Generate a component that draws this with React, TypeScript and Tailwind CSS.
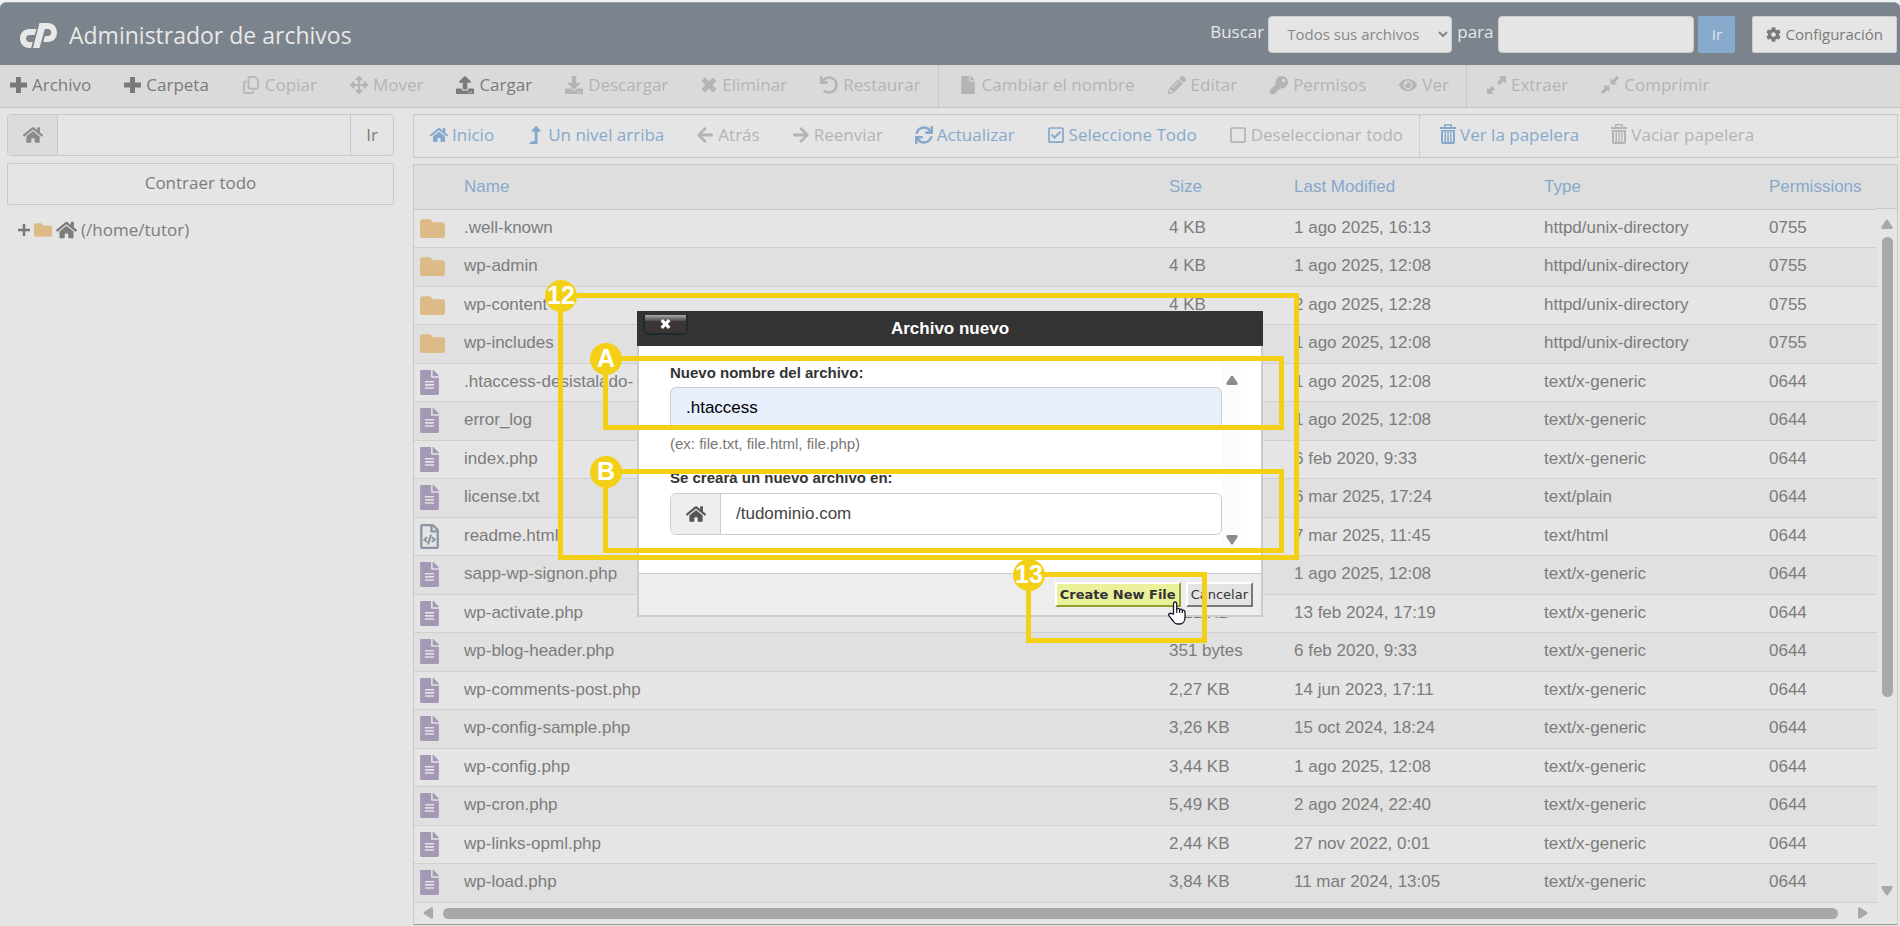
import type { ReactNode } from 'react';
import clsx from 'clsx';
import {
  FaArrowLeft,
  FaArrowRight,
  FaArrowsAlt,
  FaCog,
  FaDownload,
  FaEye,
  FaFile,
  FaFileAlt,
  FaFolder,
  FaHome,
  FaKey,
  FaLevelUpAlt,
  FaPencilAlt,
  FaRegCheckSquare,
  FaRegFileCode,
  FaRegSquare,
  FaSync,
  FaUndo,
  FaUpload,
} from 'react-icons/fa';
import { FaRegCopy } from 'react-icons/fa6';

type FileKind = 'folder' | 'text' | 'html';

interface FileRow {
  kind: FileKind;
  name: string;
  size: string;
  modified: string;
  type: string;
  permissions: string;
}

interface IconProps {
  className?: string;
}

interface Action {
  label: string;
  icon: (props: IconProps) => ReactNode;
  disabled?: boolean;
  divider?: boolean;
}

const Logo = ({ className }: IconProps) => (
  <svg viewBox="0 0 37 25" className={className} fill="currentColor">
    <path d="M16.500 6H9.500C4 6 0 10 0 15.500S4 25 9.500 25H11L12.800 19H9.500C7.500 19 6 17.500 6 15.500S7.500 12 9.500 12H14.600Z" />
    <path d="M19.500 0H28C33 0 37 4 37 9.500S33 19 28 19H23.300L25 13H28C30 13 31.200 11.500 31.200 9.500S30 6 28 6H24.800L19.500 25H13Z" />
  </svg>
);

const PlusIcon = ({ className }: IconProps) => (
  <svg viewBox="0 0 17 18" className={className} fill="currentColor">
    <path d="M6 1H11V6.500H17V11.500H11V17H6V11.500H0V6.500H6Z" />
  </svg>
);

const CrossIcon = ({ className }: IconProps) => (
  <svg viewBox="0 0 16 18" className={className} fill="currentColor">
    <path d="M4 1.500L8 5.500L12 1.500L15.500 5L11.500 9L15.500 13L12 16.500L8 12.500L4 16.500L.5 13L4.500 9L.5 5Z" />
  </svg>
);

const TrashIcon = ({ className }: IconProps) => (
  <svg viewBox="0 0 16 18" className={clsx('overflow-visible', className)} fill="currentColor">
    <path d="M4 1V-1Q4 -2 5 -2H11Q12 -2 12 -1V1H16V3H0V1ZM5.500 1H10.500V-.5H5.500Z" />
    <path
      fillRule="evenodd"
      d="M1 4H15V16Q15 18 13 18H3Q1 18 1 16ZM3 5.500V16H4.500V5.500ZM6 5.500V16H7.300V5.500ZM8.800 5.500V16H10.100V5.500ZM11.500 5.500V16H13V5.500Z"
    />
  </svg>
);

const ExpandIcon = ({ className }: IconProps) => (
  <svg viewBox="0 0 19 18" className={className} fill="currentColor">
    <path d="M11.500 0H19V7.500L16.600 5.200L12.500 9.200L9.900 6.600L13.800 2.500Z" />
    <path d="M0 18V11.500L2 13.300L5.500 10L8 12.500L4.600 15.800L6.500 18Z" />
  </svg>
);

const CompressIcon = ({ className }: IconProps) => (
  <svg viewBox="0 0 18 18" className={className} fill="currentColor">
    <path d="M9.500 8.500V2L11.700 4.100L15.800 0L18 2.200L13.900 6.300L16 8.500Z" />
    <path d="M8.500 9.500V16L6.300 13.900L2.200 18L0 15.800L4.100 11.700L2 9.500Z" />
  </svg>
);

const dir = (name: string, modified: string): FileRow => ({
  kind: 'folder',
  name,
  size: '4 KB',
  modified,
  type: 'httpd/unix-directory',
  permissions: '0755',
});

const file = (
  name: string,
  size: string,
  modified: string,
  type = 'text/x-generic',
  kind: FileKind = 'text'
): FileRow => ({ kind, name, size, modified, type, permissions: '0644' });

const files: FileRow[] = [
  dir('.well-known', '1 ago 2025, 16:13'),
  dir('wp-admin', '1 ago 2025, 12:08'),
  dir('wp-content', '2 ago 2025, 12:28'),
  dir('wp-includes', '1 ago 2025, 12:08'),
  file('.htaccess-desistalado-', '523 bytes', '1 ago 2025, 12:08'),
  file('error_log', '1,2 KB', '1 ago 2025, 12:08'),
  file('index.php', '405 bytes', '6 feb 2020, 9:33'),
  file('license.txt', '19,4 KB', '6 mar 2025, 17:24', 'text/plain'),
  file('readme.html', '7,25 KB', '7 mar 2025, 11:45', 'text/html', 'html'),
  file('sapp-wp-signon.php', '3,1 KB', '1 ago 2025, 12:08'),
  file('wp-activate.php', '7,21 KB', '13 feb 2024, 17:19'),
  file('wp-blog-header.php', '351 bytes', '6 feb 2020, 9:33'),
  file('wp-comments-post.php', '2,27 KB', '14 jun 2023, 17:11'),
  file('wp-config-sample.php', '3,26 KB', '15 oct 2024, 18:24'),
  file('wp-config.php', '3,44 KB', '1 ago 2025, 12:08'),
  file('wp-cron.php', '5,49 KB', '2 ago 2024, 22:40'),
  file('wp-links-opml.php', '2,44 KB', '27 nov 2022, 0:01'),
  file('wp-load.php', '3,84 KB', '11 mar 2024, 13:05'),
];

const mainActions: Action[] = [
  { label: 'Archivo', icon: PlusIcon },
  { label: 'Carpeta', icon: PlusIcon },
  { label: 'Copiar', icon: FaRegCopy, disabled: true },
  { label: 'Mover', icon: FaArrowsAlt, disabled: true },
  { label: 'Cargar', icon: FaUpload },
  { label: 'Descargar', icon: FaDownload, disabled: true },
  { label: 'Eliminar', icon: CrossIcon, disabled: true },
  { label: 'Restaurar', icon: FaUndo, disabled: true },
  { label: 'Cambiar el nombre', icon: FaFile, disabled: true, divider: true },
  { label: 'Editar', icon: FaPencilAlt, disabled: true },
  { label: 'Permisos', icon: FaKey, disabled: true },
  { label: 'Ver', icon: FaEye, disabled: true },
  { label: 'Extraer', icon: ExpandIcon, disabled: true, divider: true },
  { label: 'Comprimir', icon: CompressIcon, disabled: true },
];

const navActions: Action[] = [
  { label: 'Inicio', icon: FaHome },
  { label: 'Un nivel arriba', icon: FaLevelUpAlt },
  { label: 'Atrás', icon: FaArrowLeft, disabled: true },
  { label: 'Reenviar', icon: FaArrowRight, disabled: true },
  { label: 'Actualizar', icon: FaSync },
  { label: 'Seleccione Todo', icon: FaRegCheckSquare },
  { label: 'Deseleccionar todo', icon: FaRegSquare, disabled: true },
  { label: 'Ver la papelera', icon: TrashIcon, divider: true },
  { label: 'Vaciar papelera', icon: TrashIcon, disabled: true },
];

const FileIcon = ({ kind }: { kind: FileKind }) => {
  if (kind === 'folder') return <FaFolder className="h-[25px] w-[25px] text-[#ddbb88]" />;
  if (kind === 'html') return <FaRegFileCode className="h-[25px] w-[19px] text-[#8c95a3]" />;
  return <FaFileAlt className="h-[25px] w-[19px] text-[#a498b5]" />;
};

interface ActionBarProps {
  actions: Action[];
  activeClass: string;
  compact?: boolean;
}

const ActionBar = ({ actions, activeClass, compact }: ActionBarProps) => (
  <div className="flex items-stretch">
    {actions.map(({ label, icon: Icon, disabled, divider }) => (
      <button
        key={label}
        type="button"
        disabled={disabled}
        className={clsx(
          'flex items-center pb-[2px] whitespace-nowrap',
          compact ? 'gap-1 pr-4' : 'gap-[5px] pr-[17px]',
          divider ? 'border-l border-dotted border-[#bbb] pl-5' : 'pl-4',
          disabled ? 'text-[#b4b4b4]' : activeClass
        )}
      >
        <Icon className="h-[18px] w-auto" />
        {label}
      </button>
    ))}
  </div>
);

const Arrow = ({ className }: IconProps) => (
  <svg viewBox="0 0 12 10" className={clsx('h-[10px] w-3 shrink-0', className)} fill="currentColor">
    <path d="M5 1Q6 0 7 1L11.600 8Q12 10 10.500 10H1.500Q0 10 .4 8Z" />
  </svg>
);

const FileTable = () => (
  <div className="mt-[6px] border border-[#c8c8c8] border-b-[#9c9c9c]">
    <div className="flex">
      <table className="w-full table-fixed text-left font-['Liberation_Sans',Arial,sans-serif] text-[17px] leading-6 text-[#7c7c7c]">
        <colgroup>
          <col className="w-[50px]" />
          <col />
          <col className="w-[125px]" />
          <col className="w-[250px]" />
          <col className="w-[225px]" />
          <col className="w-[108px]" />
        </colgroup>
        <thead>
          <tr className="h-[44px] border-b border-[#c8c8c8] bg-[#dedede] text-[#86a9cb]">
            <td />
            <th className="font-normal">Name</th>
            <th className="font-normal">Size</th>
            <th className="font-normal">Last Modified</th>
            <th className="font-normal">Type</th>
            <th className="font-normal">Permissions</th>
          </tr>
        </thead>
        <tbody>
          {files.map((row) => (
            <tr
              key={row.name}
              className="border-b border-[#d0d0d0] odd:h-[38px] even:h-[39px] even:bg-[#e0e0e0]"
            >
              <td className="pl-[6px]">
                <FileIcon kind={row.kind} />
              </td>
              <td className="pb-px">{row.name}</td>
              <td className="pb-px">{row.size}</td>
              <td className="pb-px">{row.modified}</td>
              <td className="pb-px">{row.type}</td>
              <td className="pb-px">{row.permissions}</td>
            </tr>
          ))}
        </tbody>
      </table>
      <div className="flex w-5 shrink-0 flex-col items-center pb-[7px] text-[#a8a8a8]">
        <div className="mb-[10px] h-[44px] w-full border-b border-[#c8c8c8] bg-[#dedede]" />
        <Arrow />
        <div className="mt-[8px] h-[460px] w-[11px] rounded-full bg-current" />
        <Arrow className="mt-auto rotate-180" />
      </div>
    </div>
    <div className="flex h-[21px] items-center pr-7 pl-2 text-[#a8a8a8]">
      <Arrow className="-rotate-90" />
      <div className="mr-[19px] ml-[9px] h-[11px] flex-1 rounded-full bg-current" />
      <Arrow className="rotate-90" />
    </div>
  </div>
);

const Header = () => (
  <header className="flex h-[63px] items-center justify-between rounded-t-md border-t border-[#9aa1a8] bg-[#7b838c] pr-[3px] pl-5 text-[#e8e8e8]">
    <div className="flex items-center gap-3 pt-[2px]">
      <Logo className="h-[25px] w-[37px]" />
      <h1 className="text-[23px] leading-8">Administrador de archivos</h1>
    </div>
    <form className="flex items-center text-[17px]">
      <label htmlFor="scope" className="mr-1 pb-1">
        Buscar
      </label>
      <select
        id="scope"
        className="h-[37px] w-[184px] rounded border border-[#ccc] bg-[#e5e5e5] px-[14px] text-[15px] text-[#888]"
      >
        <option>Todos sus archivos</option>
      </select>
      <label htmlFor="query" className="mx-[5px] pb-1">
        para
      </label>
      <input
        id="query"
        type="text"
        className="h-[37px] w-[196px] rounded border border-[#ccc] bg-[#e5e5e5] px-3 text-[15px] text-[#777]"
      />
      <button type="button" className="ml-1 h-[37px] w-[37px] rounded-xs bg-[#86a9cc] text-[15px]">
        Ir
      </button>
      <button
        type="button"
        className="ml-[17px] flex h-[37px] items-center gap-1 rounded-xs border border-[#ccc] bg-[#e5e5e5] px-[13px] text-[15px] text-[#7a7a7a]"
      >
        <FaCog className="h-[15px] w-[15px]" />
        Configuración
      </button>
    </form>
  </header>
);

const Sidebar = () => (
  <aside className="w-[387px] shrink-0 text-[#7c7c7c]">
    <div className="flex h-[42px] rounded border border-[#c8c8c8]">
      <span className="flex w-[50px] items-center justify-center border-r border-[#c8c8c8] bg-[#dcdcdc]">
        <FaHome className="h-[20px] w-[20px] text-[#8a8a8a]" />
      </span>
      <input type="text" aria-label="Ruta" className="min-w-0 flex-1 px-3" />
      <button type="button" className="w-[43px] border-l border-[#c8c8c8]">
        Ir
      </button>
    </div>
    <button
      type="button"
      className="mt-[7px] h-[42px] w-full rounded-xs border border-[#c8c8c8] pb-[2px]"
    >
      Contraer todo
    </button>
    <div className="mt-3 ml-[11px] flex items-center gap-1">
      <button type="button" aria-label="Expandir" className="text-[#777]">
        <svg viewBox="0 0 12 12" className="h-3 w-3" stroke="currentColor" strokeWidth="2.500">
          <path d="M6 0V12M0 6H12" />
        </svg>
      </button>
      <FaFolder className="h-[18px] w-[18px] text-[#ddbb88]" />
      <FaHome className="h-[20px] w-[21px]" />
      <span>(/home/tutor)</span>
    </div>
  </aside>
);

const Callout = ({ children, className }: { children: ReactNode; className: string }) => (
  <div className={clsx('pointer-events-none absolute border-5 border-[#f3d016]', className)}>
    <span className="absolute -top-[18px] -left-[18px] flex h-8 w-8 items-center justify-center rounded-full bg-[#f3d016] font-['Liberation_Sans',Arial,sans-serif] text-[25px] font-bold text-white">
      {children}
    </span>
  </div>
);

const HandCursor = ({ className }: IconProps) => (
  <svg viewBox="0 0 18 24" className={className}>
    <path
      d="M5.500 13V2.700C5.500 .4 8.700 .4 8.700 2.700V8.500C9 6.800 11.600 7 11.600 8.900C12.200 7.600 14.300 8 14.300 9.800C15 8.700 17 9.200 17 11V16.500C17 20 15 23 11.500 23H9.500C7.500 23 6 21.500 5 20L1 14.600C0 13 2 11.600 3.400 12.700Z"
      fill="#fff"
      stroke="#1a1a2e"
      strokeWidth="1.300"
      strokeLinejoin="round"
    />
    <path d="M8.700 8.500V12M11.600 9V12M14.300 10V12" stroke="#1a1a2e" strokeWidth="1.200" />
  </svg>
);

const NewFileDialog = () => (
  <div className="absolute top-[311px] left-1/2 w-[626px] -translate-x-1/2 font-['Liberation_Sans',Arial,sans-serif] text-[#333]">
    <div role="dialog" aria-labelledby="dialog-title">
      <div className="relative flex h-[35px] items-center justify-center bg-[#333]">
        <button
          type="button"
          aria-label="Cerrar"
          className="absolute top-1 left-[6px] flex h-[20px] w-[45px] items-center justify-center rounded-b-md border-2 border-t-0 border-[#1d2a30] bg-linear-to-b from-[#aaa] via-[#555] via-30% to-[#3b3535] to-35% text-white"
        >
          <CrossIcon className="h-3 w-[11px]" />
        </button>
        <h2 id="dialog-title" className="text-[17px] font-bold text-white">
          Archivo nuevo
        </h2>
      </div>
      <div className="border-2 border-t-0 border-[#ccc] bg-white">
        <div className="flex h-[227px] pt-[15px] pr-5 pb-[26px] pl-[31px]">
          <div className="flex-1 pt-[2px]">
            <label htmlFor="file-name" className="block text-[15px] leading-5 font-bold">
              Nuevo nombre del archivo:
            </label>
            <input
              id="file-name"
              type="text"
              defaultValue=".htaccess"
              className="mt-[4px] block h-[42px] w-full rounded-md border border-[#ccc] bg-[#e8effd] px-[15px] text-[17px] text-black"
            />
            <p className="mt-[5px] text-[15px] leading-5 text-[#777]">
              (ex: file.txt, file.html, file.php)
            </p>
            <label htmlFor="file-path" className="mt-[14px] block text-[15px] leading-5 font-bold">
              Se creará un nuevo archivo en:
            </label>
            <div className="mt-[5px] flex h-[42px] overflow-hidden rounded-md border border-[#ccc]">
              <span className="flex w-[50px] items-center justify-center border-r border-[#ccc] bg-[#eee]">
                <FaHome className="h-5 w-5 text-[#555]" />
              </span>
              <input
                id="file-path"
                type="text"
                defaultValue="/tudominio.com"
                className="min-w-0 flex-1 px-[15px] text-[17px] text-[#444]"
              />
            </div>
          </div>
          <div className="flex w-[19px] flex-col items-center justify-between bg-[#fcfcfc] pt-[14px] pb-[2px] text-[#8b8b8b]">
            <Arrow />
            <Arrow className="rotate-180" />
          </div>
        </div>
        <div className="flex h-[42px] justify-end gap-[5px] border-t border-[#ccc] bg-[#ededed] pt-[8px] pr-2 font-['DejaVu_Sans',Verdana,sans-serif] text-[13px]">
          <button
            type="button"
            className="h-[25px] border-2 border-t-white border-r-[#92a12e] border-b-[#92a12e] border-l-white bg-[#ebf09b] px-[3px] font-bold"
          >
            Create New File
          </button>
          <button
            type="button"
            className="h-[25px] border-2 border-t-white border-r-[#777] border-b-[#777] border-l-white bg-[#e4e4e4] px-[3px]"
          >
            Cancelar
          </button>
        </div>
      </div>
    </div>

    {/* numbered steps drawn over the dialog */}
    <Callout className="-top-[18px] -left-[79px] h-[267px] w-[741px]">12</Callout>
    <Callout className="top-[45px] -left-[34px] h-[74px] w-[681px]">A</Callout>
    <Callout className="top-[158px] -left-[34px] h-[84px] w-[681px]">B</Callout>
    <Callout className="top-[261px] left-[389px] h-[71px] w-[181px]">13</Callout>
    <HandCursor className="absolute top-[290px] left-[531px] h-6 w-[18px]" />
  </div>
);

export default function App() {
  return (
    <div className="relative min-h-screen overflow-hidden bg-[#e5e5e5] font-['Open_Sans','Noto_Sans',sans-serif] text-[17px]">
      <div className="bg-[#eff1f3] pt-[2px]">
        <Header />
      </div>
      <div className="flex h-[43px] border-b border-[#c4c4c4] bg-[#dadada]">
        <div className="-ml-[6px] flex">
          <ActionBar actions={mainActions} activeClass="text-[#7a7a7a]" />
        </div>
      </div>
      <main className="flex gap-[19px] pt-[6px] pr-[2px] pl-[7px]">
        <Sidebar />
        <section className="min-w-0 flex-1">
          <nav className="flex h-[44px] border border-[#c8c8c8]">
            <ActionBar actions={navActions} activeClass="text-[#86a9cb]" compact />
          </nav>
          <FileTable />
        </section>
      </main>
      <NewFileDialog />
    </div>
  );
}
